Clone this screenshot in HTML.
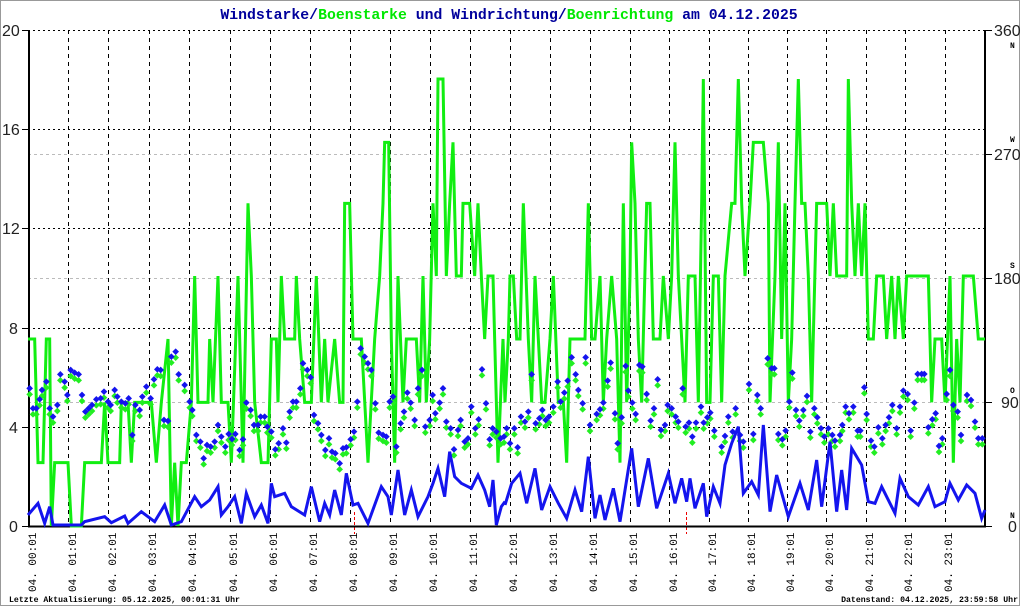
<!DOCTYPE html>
<html><head><meta charset="utf-8"><style>
html,body{margin:0;padding:0;background:#fff}
svg{display:block}
.t{font-family:"Liberation Mono",monospace}
</style></head><body>
<svg width="1020" height="606" viewBox="0 0 1020 606" xmlns="http://www.w3.org/2000/svg">
<defs>
<marker id="db" markerUnits="userSpaceOnUse" markerWidth="22" markerHeight="22" refX="11" refY="11" viewBox="0 0 22 22"><path d="M11 1 L21 11 L11 21 L1 11Z" fill="#1414ee"/></marker>
<marker id="dg" markerUnits="userSpaceOnUse" markerWidth="22" markerHeight="22" refX="11" refY="11" viewBox="0 0 22 22"><path d="M11 1 L21 11 L11 21 L1 11Z" fill="#22ee22"/></marker>
</defs>
<rect x="0.5" y="0.5" width="1019" height="605" fill="#fff" stroke="#999"/>
<text class="t" x="509" y="19" text-anchor="middle" font-size="14.8" font-weight="bold"><tspan fill="#00009c">Windstarke/</tspan><tspan fill="#00e800">Boenstarke</tspan><tspan fill="#00009c"> und Windrichtung/</tspan><tspan fill="#00e800">Boenrichtung</tspan><tspan fill="#00009c"> am 04.12.2025</tspan></text>
<!-- gray grid -->
<g stroke="#bbb" stroke-width="1" stroke-dasharray="3 3">
<line x1="28" y1="154.5" x2="985" y2="154.5"/><line x1="28" y1="278.5" x2="985" y2="278.5"/><line x1="28" y1="402.5" x2="985" y2="402.5"/>
</g>
<g stroke="#000" stroke-width="1" stroke-dasharray="2 3">
<line x1="28" y1="30.5" x2="985" y2="30.5"/><line x1="28" y1="129.5" x2="985" y2="129.5"/><line x1="28" y1="228.5" x2="985" y2="228.5"/><line x1="28" y1="328.5" x2="985" y2="328.5"/><line x1="28" y1="427.5" x2="985" y2="427.5"/>
</g>
<g stroke="#000" stroke-width="1" stroke-dasharray="4 4">
<line x1="68.5" y1="30" x2="68.5" y2="526"/><line x1="108.5" y1="30" x2="108.5" y2="526"/><line x1="149.5" y1="30" x2="149.5" y2="526"/><line x1="189.5" y1="30" x2="189.5" y2="526"/><line x1="230.5" y1="30" x2="230.5" y2="526"/><line x1="270.5" y1="30" x2="270.5" y2="526"/><line x1="310.5" y1="30" x2="310.5" y2="526"/><line x1="350.5" y1="30" x2="350.5" y2="526"/><line x1="390.5" y1="30" x2="390.5" y2="526"/><line x1="430.5" y1="30" x2="430.5" y2="526"/><line x1="470.5" y1="30" x2="470.5" y2="526"/><line x1="510.5" y1="30" x2="510.5" y2="526"/><line x1="550.5" y1="30" x2="550.5" y2="526"/><line x1="590.5" y1="30" x2="590.5" y2="526"/><line x1="630.5" y1="30" x2="630.5" y2="526"/><line x1="669.5" y1="30" x2="669.5" y2="526"/><line x1="709.5" y1="30" x2="709.5" y2="526"/><line x1="748.5" y1="30" x2="748.5" y2="526"/><line x1="787.5" y1="30" x2="787.5" y2="526"/><line x1="826.5" y1="30" x2="826.5" y2="526"/><line x1="866.5" y1="30" x2="866.5" y2="526"/><line x1="905.5" y1="30" x2="905.5" y2="526"/><line x1="945.5" y1="30" x2="945.5" y2="526"/>
</g>
<g stroke="#e00" stroke-width="1" stroke-dasharray="3 2"><line x1="354.5" y1="512" x2="354.5" y2="534"/><line x1="686.5" y1="512" x2="686.5" y2="534"/></g>
<!-- axes -->
<g stroke="#000" stroke-width="2">
<line x1="29" y1="30" x2="29" y2="527"/><line x1="985" y1="30" x2="985" y2="527"/><line x1="28" y1="526.5" x2="986" y2="526.5"/>
</g>
<g stroke="#000" stroke-width="1">
<line x1="22" y1="30.5" x2="28" y2="30.5"/><line x1="22" y1="129.5" x2="28" y2="129.5"/><line x1="22" y1="228.5" x2="28" y2="228.5"/><line x1="22" y1="328.5" x2="28" y2="328.5"/><line x1="22" y1="427.5" x2="28" y2="427.5"/><line x1="22" y1="526.5" x2="28" y2="526.5"/>
<line x1="985" y1="30.5" x2="992" y2="30.5"/><line x1="985" y1="154.5" x2="992" y2="154.5"/><line x1="985" y1="278.5" x2="992" y2="278.5"/><line x1="985" y1="402.5" x2="992" y2="402.5"/><line x1="985" y1="526.5" x2="992" y2="526.5"/>
</g>
<g font-family="Liberation Sans,sans-serif" font-size="16" fill="#222">
<text x="2" y="36">20</text><text x="2" y="135">16</text><text x="2" y="234">12</text><text x="9" y="334">8</text><text x="9" y="433">4</text><text x="9" y="532">0</text>
<text x="994" y="36">360</text><text x="994" y="160">270</text><text x="994" y="284">180</text><text x="1001" y="408">90</text><text x="1008" y="532">0</text>
</g>
<g class="t" font-size="8" font-weight="bold" fill="#000">
<text x="1010" y="48">N</text><text x="1010" y="142">W</text><text x="1010" y="268">S</text><text x="1010" y="393">O</text><text x="1010" y="518">N</text>
</g>
<!-- green gust line in zoom coordinates -->
<g transform="translate(28,60) scale(0.33333)" fill="none" stroke-linejoin="miter">
<polyline vector-effect="non-scaling-stroke" stroke="#11ee11" stroke-width="3" points="0,837 20,837 30,1208 45,1208 55,837 65,837 70,1398 80,1208 120,1208 130,1398 160,1398 170,1208 220,1208 230,1027 240,1208 275,1208 280,1027 300,1027 310,1208 320,1027 370,1027 385,1208 400,1027 420,837 430,1398 440,1208 450,1398 460,1208 475,1208 490,1027 500,648 510,1027 540,1027 545,837 555,1027 570,648 580,1027 600,1027 610,1208 630,648 645,1208 660,430 670,648 680,1027 700,1208 720,1208 730,837 745,837 750,1027 760,648 770,837 800,837 805,648 815,837 830,1027 850,1027 865,648 880,1027 890,837 900,1027 920,837 935,1027 945,1027 950,430 965,430 975,837 1000,837 1020,1208 1040,837 1055,648 1065,430 1070,247 1082,247 1090,837 1100,1208 1110,648 1125,1027 1135,837 1165,837 1175,1027 1185,648 1195,1027 1205,837 1215,430 1225,648 1230,57 1245,57 1255,648 1265,430 1275,247 1285,648 1300,648 1305,430 1325,430 1340,648 1350,430 1360,648 1370,837 1380,648 1395,648 1400,837 1410,1208 1425,837 1431,1027"/>
</g>
<g transform="translate(505,60) scale(0.33333)" fill="none">
<polyline vector-effect="non-scaling-stroke" stroke="#11ee11" stroke-width="3" points="0,1027 10,837 15,648 25,648 35,837 45,837 55,430 60,565 70,837 80,1027 90,648 100,837 110,1027 120,1027 135,837 145,648 160,1027 175,1027 185,1208 195,837 240,837 250,430 260,837 270,837 285,648 295,1027 305,837 320,648 335,837 345,1208 355,430 365,1027 375,648 380,247 390,430 400,837 410,1027 425,430 435,430 445,837 465,837 475,648 490,837 500,648 510,247 520,648 530,837 540,1027 550,648 570,648 580,1027 590,430 595,57 605,1027 615,1027 625,648 640,648 650,1027 660,648 680,430 690,430 700,57 710,430 720,648 735,430 745,247 775,247 790,430 795,1027 810,648 820,247 830,837 840,430 850,1027 860,837 870,430 880,57 890,430 900,430 910,648 920,1027 935,430 965,430 975,648 985,430 995,648 1025,648 1030,57 1040,430 1050,648 1060,430 1070,648 1080,430 1090,837 1105,837 1115,648 1135,648 1145,837 1160,648 1170,837 1180,648 1195,837 1205,648 1270,648 1280,1027 1290,837 1310,837 1320,1027 1335,648 1345,1208 1355,837 1365,1027 1375,648 1405,648 1420,837 1440,837"/>
</g>
<!-- diamonds -->
<g transform="translate(28,66) scale(0.33333)" fill="none" stroke="none">
<polyline marker-start="url(#dg)" marker-mid="url(#dg)" marker-end="url(#dg)" points="5,985 15,1045 25,1045 35,1018 42,990 55,965 65,1045 75,1070 88,1035 97,943 110,965 118,1005 128,930 140,938 152,943 162,1005 172,1055 182,1045 192,1035 205,1018 218,1015 228,995 240,1025 248,1035 260,990 268,1010 280,1025 292,1030 302,1015 313,1125 322,1035 335,1050 343,1010 355,980 368,1015 378,958 388,928 398,930 408,1080 420,1083 430,890 443,875 452,943 470,975 485,1025 493,1050 505,1125 517,1145 527,1195 537,1155 548,1160 560,1145 570,1095 580,1130 592,1160 602,1122 612,1137 622,1122 635,1170 645,1138 655,1028 668,1050 678,1095 690,1095 698,1070 710,1070 718,1100 730,1115 742,1168 752,1150 765,1105 775,1148 785,1055 795,1025 805,1025 817,985 825,910 838,930 848,952 858,1065 870,1090 880,1125 892,1170 903,1135 912,1175 922,1180 935,1210 945,1165 955,1162 968,1138 978,1115 988,1025 998,865 1010,890 1020,910 1030,930 1042,1030 1052,1118 1065,1125 1075,1130 1085,1025 1095,1010 1105,1160 1118,1090 1128,1055 1138,998 1148,1028 1160,1080 1170,985 1182,930 1192,1100 1205,1080 1214,1005 1222,1060 1235,1028 1245,985 1255,1085 1268,1105 1278,1168 1290,1110 1298,1080 1310,1145 1320,1135 1330,1040 1342,1105 1352,1078 1362,928 1374,1030 1385,1138 1394,1105 1405,1115 1418,1135 1428,1130"/>
</g>
<g transform="translate(505,66) scale(0.33333)" fill="none" stroke="none">
<polyline marker-start="url(#dg)" marker-mid="url(#dg)" marker-end="url(#dg)" points="5,1105 15,1150 28,1105 38,1162 48,1070 60,1085 70,1055 80,943 92,1090 103,1075 112,1050 122,1080 132,1070 145,1040 158,965 167,1025 178,998 188,962 200,892 212,943 220,990 233,1030 242,892 255,1095 275,1062 285,1048 295,1028 308,962 317,908 330,1060 338,1150 350,1072 362,918 370,992 382,1028 392,1062 403,915 412,920 425,1002 437,1082 447,1045 458,958 468,1110 480,1095 488,1035 500,1045 512,1070 520,1085 533,985 542,1100 552,1088 562,1130 573,1088 588,1040 596,1088 607,1072 616,1058 628,1112 650,1160 660,1128 670,1070 683,1115 692,1045 705,1125 715,1145 732,972 745,1122 757,1005 767,1045 788,895 800,925 808,925 820,1122 832,1138 842,1112 853,1025 862,938 873,1050 883,1082 895,1050 906,1008 916,1115 928,1045 937,1072 948,1105 958,1130 970,1105 982,1125 990,1142 1005,1125 1012,1095 1022,1040 1032,1060 1045,1040 1058,1112 1066,1112 1078,982 1085,1062 1098,1142 1108,1160 1120,1102 1132,1135 1142,1095 1152,1072 1162,1035 1175,1105 1185,1040 1195,992 1208,1002 1217,1112 1228,1028 1238,942 1250,942 1258,942 1270,1102 1282,1078 1292,1060 1302,1158 1312,1135 1325,1002 1335,930 1345,1035 1358,1055 1368,1125 1386,1005 1398,1020 1410,1085 1420,1135 1432,1135"/>
</g>
<g transform="translate(28,60) scale(0.33333)" fill="none" stroke="none">
<polyline marker-start="url(#db)" marker-mid="url(#db)" marker-end="url(#db)" points="5,985 15,1045 25,1045 35,1018 42,990 55,965 65,1045 75,1070 88,1035 97,943 110,965 118,1005 128,930 140,938 152,943 162,1005 172,1055 182,1045 192,1035 205,1018 218,1015 228,995 240,1025 248,1035 260,990 268,1010 280,1025 292,1030 302,1015 313,1125 322,1035 335,1050 343,1010 355,980 368,1015 378,958 388,928 398,930 408,1080 420,1083 430,890 443,875 452,943 470,975 485,1025 493,1050 505,1125 517,1145 527,1195 537,1155 548,1160 560,1145 570,1095 580,1130 592,1160 602,1122 612,1137 622,1122 635,1170 645,1138 655,1028 668,1050 678,1095 690,1095 698,1070 710,1070 718,1100 730,1115 742,1168 752,1150 765,1105 775,1148 785,1055 795,1025 805,1025 817,985 825,910 838,930 848,952 858,1065 870,1090 880,1125 892,1170 903,1135 912,1175 922,1180 935,1210 945,1165 955,1162 968,1138 978,1115 988,1025 998,865 1010,890 1020,910 1030,930 1042,1030 1052,1118 1065,1125 1075,1130 1085,1025 1095,1010 1105,1160 1118,1090 1128,1055 1138,998 1148,1028 1160,1080 1170,985 1182,930 1192,1100 1205,1080 1214,1005 1222,1060 1235,1028 1245,985 1255,1085 1268,1105 1278,1168 1290,1110 1298,1080 1310,1145 1320,1135 1330,1040 1342,1105 1352,1078 1362,928 1374,1030 1385,1138 1394,1105 1405,1115 1418,1135 1428,1130"/>
</g>
<g transform="translate(505,60) scale(0.33333)" fill="none" stroke="none">
<polyline marker-start="url(#db)" marker-mid="url(#db)" marker-end="url(#db)" points="5,1105 15,1150 28,1105 38,1162 48,1070 60,1085 70,1055 80,943 92,1090 103,1075 112,1050 122,1080 132,1070 145,1040 158,965 167,1025 178,998 188,962 200,892 212,943 220,990 233,1030 242,892 255,1095 275,1062 285,1048 295,1028 308,962 317,908 330,1060 338,1150 350,1072 362,918 370,992 382,1028 392,1062 403,915 412,920 425,1002 437,1082 447,1045 458,958 468,1110 480,1095 488,1035 500,1045 512,1070 520,1085 533,985 542,1100 552,1088 562,1130 573,1088 588,1040 596,1088 607,1072 616,1058 628,1112 650,1160 660,1128 670,1070 683,1115 692,1045 705,1125 715,1145 732,972 745,1122 757,1005 767,1045 788,895 800,925 808,925 820,1122 832,1138 842,1112 853,1025 862,938 873,1050 883,1082 895,1050 906,1008 916,1115 928,1045 937,1072 948,1105 958,1130 970,1105 982,1125 990,1142 1005,1125 1012,1095 1022,1040 1032,1060 1045,1040 1058,1112 1066,1112 1078,982 1085,1062 1098,1142 1108,1160 1120,1102 1132,1135 1142,1095 1152,1072 1162,1035 1175,1105 1185,1040 1195,992 1208,1002 1217,1112 1228,1028 1238,942 1250,942 1258,942 1270,1102 1282,1078 1292,1060 1302,1158 1312,1135 1325,1002 1335,930 1345,1035 1358,1055 1368,1125 1386,1005 1398,1020 1410,1085 1420,1135 1432,1135"/>
</g>
<!-- blue wind line -->
<g transform="translate(28,60) scale(0.33333)" fill="none">
<polyline vector-effect="non-scaling-stroke" stroke="#1414ee" stroke-width="3" points="0,1365 30,1330 50,1390 65,1340 75,1395 160,1395 170,1385 230,1370 250,1388 290,1368 300,1390 340,1355 380,1385 410,1335 430,1395 460,1385 500,1310 520,1340 545,1320 570,1280 580,1365 600,1340 620,1310 640,1390 655,1300 680,1370 700,1335 720,1390 730,1270 740,1310 770,1300 790,1340 830,1365 850,1280 875,1385 890,1330 905,1365 920,1290 940,1365 955,1240 975,1335 990,1330 1020,1390 1060,1280 1080,1310 1090,1365 1110,1230 1130,1365 1150,1290 1170,1370 1200,1310 1215,1270 1230,1225 1250,1310 1265,1175 1280,1250 1300,1270 1330,1285 1350,1245 1370,1290 1385,1340 1395,1260 1405,1395 1420,1340 1431,1325"/>
</g>
<g transform="translate(505,60) scale(0.33333)" fill="none">
<polyline vector-effect="non-scaling-stroke" stroke="#1414ee" stroke-width="3" points="0,1335 20,1270 45,1240 65,1330 90,1225 110,1350 135,1280 160,1330 185,1375 210,1290 230,1355 250,1190 270,1375 285,1305 300,1380 325,1285 345,1385 380,1165 400,1340 430,1195 455,1345 490,1240 510,1330 530,1255 545,1325 555,1255 570,1345 595,1270 605,1370 625,1280 645,1330 660,1215 680,1150 700,1100 715,1300 740,1265 760,1305 775,1095 795,1355 815,1245 850,1370 885,1270 910,1350 935,1200 950,1340 975,1145 995,1355 1010,1230 1025,1350 1040,1165 1070,1215 1090,1325 1110,1330 1130,1280 1170,1360 1185,1255 1210,1310 1240,1335 1270,1280 1290,1340 1320,1325 1335,1270 1360,1320 1385,1275 1410,1300 1430,1375 1440,1350"/>
</g>
<!-- x labels -->
<g class="t" font-size="11" fill="#000">
<text transform="translate(36,592) rotate(-90)">04. 00:01</text>
<text transform="translate(76,592) rotate(-90)">04. 01:01</text>
<text transform="translate(116,592) rotate(-90)">04. 02:01</text>
<text transform="translate(156,592) rotate(-90)">04. 03:01</text>
<text transform="translate(196,592) rotate(-90)">04. 04:01</text>
<text transform="translate(237,592) rotate(-90)">04. 05:01</text>
<text transform="translate(277,592) rotate(-90)">04. 06:01</text>
<text transform="translate(317,592) rotate(-90)">04. 07:01</text>
<text transform="translate(357,592) rotate(-90)">04. 08:01</text>
<text transform="translate(397,592) rotate(-90)">04. 09:01</text>
<text transform="translate(437,592) rotate(-90)">04. 10:01</text>
<text transform="translate(477,592) rotate(-90)">04. 11:01</text>
<text transform="translate(517,592) rotate(-90)">04. 12:01</text>
<text transform="translate(557,592) rotate(-90)">04. 13:01</text>
<text transform="translate(597,592) rotate(-90)">04. 14:01</text>
<text transform="translate(637,592) rotate(-90)">04. 15:01</text>
<text transform="translate(677,592) rotate(-90)">04. 16:01</text>
<text transform="translate(716,592) rotate(-90)">04. 17:01</text>
<text transform="translate(755,592) rotate(-90)">04. 18:01</text>
<text transform="translate(794,592) rotate(-90)">04. 19:01</text>
<text transform="translate(833,592) rotate(-90)">04. 20:01</text>
<text transform="translate(873,592) rotate(-90)">04. 21:01</text>
<text transform="translate(912,592) rotate(-90)">04. 22:01</text>
<text transform="translate(952,592) rotate(-90)">04. 23:01</text>
</g>
<g class="t" font-size="8.2" font-weight="bold" fill="#000">
<text x="9" y="602">Letzte Aktualisierung: 05.12.2025, 00:01:31 Uhr</text>
<text x="1018" y="602" text-anchor="end">Datenstand: 04.12.2025, 23:59:58 Uhr</text>
</g>
</svg>
</body></html>
